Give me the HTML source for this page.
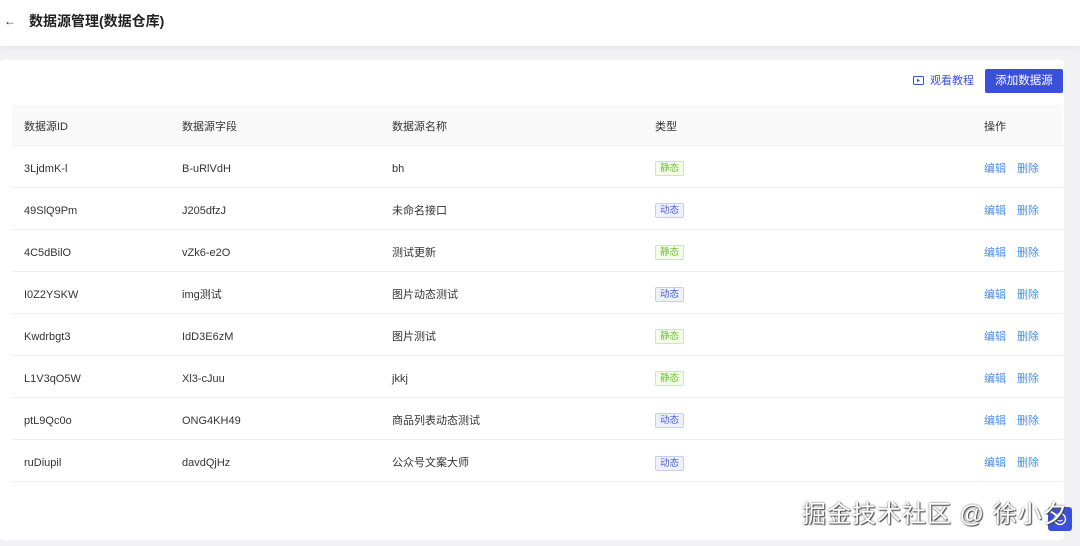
<!DOCTYPE html>
<html><head><meta charset="utf-8"><style>
*{margin:0;padding:0;box-sizing:border-box}
body{width:1080px;height:546px;overflow:hidden;background:#f2f2f4;font-family:"Liberation Sans","Noto Sans CJK SC",sans-serif;position:relative;color:#333}
.hdr{position:absolute;left:0;top:0;width:1080px;height:46px;background:#fff;box-shadow:0 2px 6px rgba(0,0,0,.06)}
.hdr .back{position:absolute;left:4px;top:13px;font-size:12px;line-height:16px;color:#333}
.hdr .t{position:absolute;left:29px;top:12px;font-size:14px;line-height:18px;font-weight:bold;color:#222}
.card{position:absolute;left:0;top:60px;width:1064px;height:480px;background:#fff;border-radius:4px}
.watch{position:absolute;left:913px;top:74px;font-size:11px;line-height:14px;color:#3a4fd8}
.btn{position:absolute;left:985px;top:69px;width:78px;height:24px;background:#3b50d9;color:#fff;font-size:11.5px;text-align:center;line-height:24px;border-radius:2px}
.th{position:absolute;left:12px;top:105px;width:1051px;height:41px;background:#f9f9f9;border-bottom:1px solid #eee}
.cell{position:absolute;font-size:11px;line-height:14px;color:#333;white-space:nowrap;margin-top:2px}
.row{position:absolute;left:12px;width:1051px;height:42px;border-bottom:1px solid #eee}
.tag{position:absolute;font-size:9.5px;padding:0 4px;height:15px;line-height:13px;border-radius:2px;margin-top:1px}
.s{color:#6fbf3f;background:#f4fbe9;border:1px solid #c9ebae}
.d{color:#4a5fd0;background:#eef1fb;border:1px solid #c6cdef}
.op{position:absolute;font-size:11px;line-height:14px;color:#4a8ee6;margin-top:2px}
.wm{position:absolute;left:802px;top:500px;font-size:24px;line-height:30px;color:#fff;text-shadow:0 0 2px #555,1px 1px 1px #444;letter-spacing:1px}
.fab{position:absolute;left:1048px;top:507px;width:24px;height:24px;background:#3b50d9;border-radius:3px}
</style></head><body>
<div class="hdr"><span class="back">←</span><span class="t">数据源管理(数据仓库)</span></div>
<div class="card"></div>
<div class="watch"><svg width="11" height="9" style="vertical-align:-1px;margin-right:6px"><rect x=".5" y=".5" width="10" height="8" rx="1" fill="none" stroke="#3a4fd8"/><path d="M4 2.7v3.6L7 4.5z" fill="#3a4fd8"/></svg>观看教程</div>
<div class="btn">添加数据源</div>
<div class="th"></div>
<div class="cell" style="left:24px;top:118px">数据源ID</div>
<div class="cell" style="left:182px;top:118px">数据源字段</div>
<div class="cell" style="left:392px;top:118px">数据源名称</div>
<div class="cell" style="left:655px;top:118px">类型</div>
<div class="cell" style="left:984px;top:118px">操作</div>

<div class="row" style="top:146px"></div>
<div class="cell" style="left:24px;top:160px">3LjdmK-l</div><div class="cell" style="left:182px;top:160px">B-uRlVdH</div><div class="cell" style="left:392px;top:160px">bh</div><span class="tag s" style="left:655px;top:160px">静态</span><span class="op" style="left:984px;top:160px">编辑</span><span class="op" style="left:1017px;top:160px">删除</span>

<div class="row" style="top:188px"></div>
<div class="cell" style="left:24px;top:202px">49SlQ9Pm</div><div class="cell" style="left:182px;top:202px">J205dfzJ</div><div class="cell" style="left:392px;top:202px">未命名接口</div><span class="tag d" style="left:655px;top:202px">动态</span><span class="op" style="left:984px;top:202px">编辑</span><span class="op" style="left:1017px;top:202px">删除</span>

<div class="row" style="top:230px"></div>
<div class="cell" style="left:24px;top:244px">4C5dBilO</div><div class="cell" style="left:182px;top:244px">vZk6-e2O</div><div class="cell" style="left:392px;top:244px">测试更新</div><span class="tag s" style="left:655px;top:244px">静态</span><span class="op" style="left:984px;top:244px">编辑</span><span class="op" style="left:1017px;top:244px">删除</span>

<div class="row" style="top:272px"></div>
<div class="cell" style="left:24px;top:286px">I0Z2YSKW</div><div class="cell" style="left:182px;top:286px">img测试</div><div class="cell" style="left:392px;top:286px">图片动态测试</div><span class="tag d" style="left:655px;top:286px">动态</span><span class="op" style="left:984px;top:286px">编辑</span><span class="op" style="left:1017px;top:286px">删除</span>

<div class="row" style="top:314px"></div>
<div class="cell" style="left:24px;top:328px">Kwdrbgt3</div><div class="cell" style="left:182px;top:328px">IdD3E6zM</div><div class="cell" style="left:392px;top:328px">图片测试</div><span class="tag s" style="left:655px;top:328px">静态</span><span class="op" style="left:984px;top:328px">编辑</span><span class="op" style="left:1017px;top:328px">删除</span>

<div class="row" style="top:356px"></div>
<div class="cell" style="left:24px;top:370px">L1V3qO5W</div><div class="cell" style="left:182px;top:370px">Xl3-cJuu</div><div class="cell" style="left:392px;top:370px">jkkj</div><span class="tag s" style="left:655px;top:370px">静态</span><span class="op" style="left:984px;top:370px">编辑</span><span class="op" style="left:1017px;top:370px">删除</span>

<div class="row" style="top:398px"></div>
<div class="cell" style="left:24px;top:412px">ptL9Qc0o</div><div class="cell" style="left:182px;top:412px">ONG4KH49</div><div class="cell" style="left:392px;top:412px">商品列表动态测试</div><span class="tag d" style="left:655px;top:412px">动态</span><span class="op" style="left:984px;top:412px">编辑</span><span class="op" style="left:1017px;top:412px">删除</span>

<div class="row" style="top:440px"></div>
<div class="cell" style="left:24px;top:454px">ruDiupil</div><div class="cell" style="left:182px;top:454px">davdQjHz</div><div class="cell" style="left:392px;top:454px">公众号文案大师</div><span class="tag d" style="left:655px;top:455px">动态</span><span class="op" style="left:984px;top:454px">编辑</span><span class="op" style="left:1017px;top:454px">删除</span>

<div class="fab"><svg width="24" height="24"><circle cx="12" cy="12" r="5.5" fill="none" stroke="#fff" stroke-width="1.3"/><path d="M9.5 13q2.5 2 5 0" fill="none" stroke="#fff"/></svg></div>
<div class="wm">掘金技术社区 @ 徐小夕</div>
</body></html>
